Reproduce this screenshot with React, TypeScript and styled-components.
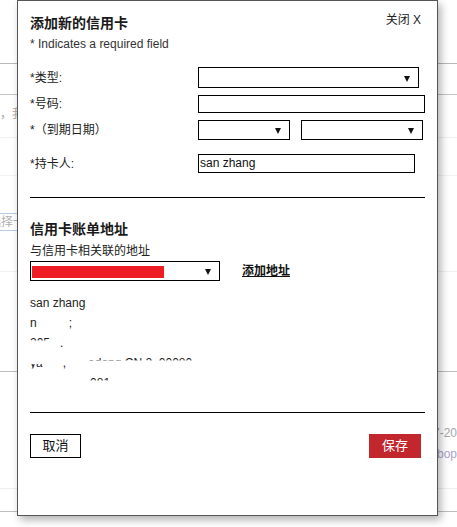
import React from 'react';
import styled, { createGlobalStyle } from 'styled-components';

const GlobalStyle = createGlobalStyle`
  html, body {
    margin: 0;
    padding: 0;
    background: #fff;
  }
  body {
    font-family: 'Liberation Sans', 'Noto Sans CJK SC', sans-serif;
    font-size: 12px;
    color: #222;
  }
`;

type Frag = { text: string; mode?: 'show' | 'hide' | 'top' | 'low' };

const addressLines: Frag[][] = [
  [{ text: 'san zhang' }],
  [{ text: 'n' }, { text: 'anjing', mode: 'hide' }, { text: ';' }],
  [{ text: '205', mode: 'top' }, { text: ' h', mode: 'hide' }, { text: '.' }],
  [
    { text: 'ya', mode: 'low' },
    { text: 'ngp', mode: 'hide' },
    { text: ',' },
    { text: ' dist', mode: 'hide' },
    { text: 'edong CN 2', mode: 'top' },
    { text: '0', mode: 'hide' },
    { text: '00080', mode: 'top' },
  ],
  [{ text: '130000000', mode: 'hide' }, { text: '081', mode: 'top' }],
];

function Arrow() {
  return (
    <ArrowIcon viewBox="0 0 6 6" width="6" height="6">
      <polygon points="0,0 6,0 3,6" fill="#111" />
    </ArrowIcon>
  );
}

function App(): JSX.Element {
  return (
    <Page>
      <GlobalStyle />
      <Backdrop>
        <BgRow $h={63} $line="#b8b8b8" />
        <BgRow $h={30} $line="#c4c4c4" />
        <BgRow $h={42} $line="#efefef">
          <BgText $top={12}>，我们</BgText>
        </BgRow>
        <BgRow $h={37} $line="#f2f2f2" />
        <BgRow $h={95} $line="#f0f0f0">
          <BgInput>请选择一项</BgInput>
        </BgRow>
        <BgRow $h={99} $line="#bdbdbd" />
        <BgRow $h={116} $line="#eeeeee">
          <BgRight>
            <BgDate>2017-2018</BgDate>
            <BgLink>shopbop</BgLink>
          </BgRight>
        </BgRow>
        <BgRow $h={22} $line="#bdbdbd" />
      </Backdrop>

      <Dialog>
        <Header>
          <Title>添加新的信用卡</Title>
          <Close>关闭 X</Close>
        </Header>
        <Note>* Indicates a required field</Note>

        <Form>
          <FormRow $mt={0}>
            <Label>*类型:</Label>
            <Select $w={221} $h={21}>
              <Arrow />
            </Select>
          </FormRow>
          <FormRow $mt={7}>
            <Label>*号码:</Label>
            <TextInput $w={227} $h={18} />
          </FormRow>
          <FormRow $mt={7}>
            <Label>*（到期日期）</Label>
            <Fields>
              <Select $w={92} $h={20}>
                <Arrow />
              </Select>
              <Select $w={122} $h={20}>
                <Arrow />
              </Select>
            </Fields>
          </FormRow>
          <FormRow $mt={14}>
            <Label>*持卡人:</Label>
            <TextInput $w={217} $h={19}>san zhang</TextInput>
          </FormRow>
        </Form>

        <Divider $mt={24} />

        <SectionTitle>信用卡账单地址</SectionTitle>
        <SubTitle>与信用卡相关联的地址</SubTitle>
        <AddressRow>
          <Select $w={190} $h={20}>
            <Redacted />
            <Arrow />
          </Select>
          <AddLink>添加地址</AddLink>
        </AddressRow>

        <Address>
          {addressLines.map((line, i) => (
            <AddressLine key={`line_${i}`}>
              {line.map((f, j) => (
                <Piece key={`piece_${j}`} $mode={f.mode || 'show'}>
                  {f.text}
                </Piece>
              ))}
            </AddressLine>
          ))}
        </Address>

        <Divider $mt={19} />

        <Footer>
          <CancelButton>取消</CancelButton>
          <SaveButton>保存</SaveButton>
        </Footer>
      </Dialog>
    </Page>
  );
}

const Page = styled.div`
  position: relative;
  width: 457px;
  height: 527px;
  overflow: hidden;
`;

const Backdrop = styled.div`
  display: flex;
  flex-direction: column;
`;

const BgRow = styled.div<{ $h: number; $line: string }>`
  position: relative;
  height: ${(p) => p.$h}px;
  border-bottom: 1px solid ${(p) => p.$line};
  flex-shrink: 0;
`;

const BgText = styled.div<{ $top: number }>`
  padding-top: ${(p) => p.$top}px;
  font-size: 12px;
  line-height: 14px;
  color: #a8a8a8;
`;

const BgInput = styled.div`
  margin: 37px 0 0 -24px;
  width: 120px;
  height: 18px;
  box-sizing: border-box;
  border: 1px solid #b7cbe2;
  font-size: 12px;
  line-height: 16px;
  color: #b0b0b0;
`;

const BgRight = styled.div`
  display: flex;
  flex-direction: column;
  gap: 7px;
  margin: 54px 0 0 413px;
  font-size: 12px;
  line-height: 14px;
`;

const BgDate = styled.span`
  color: #a6a6a6;
  white-space: nowrap;
`;

const BgLink = styled.span`
  color: #ada4c9;
  white-space: nowrap;
  margin-left: -2px;
`;

const Dialog = styled.div`
  position: absolute;
  left: 17px;
  top: 0;
  width: 421px;
  height: 516px;
  box-sizing: border-box;
  padding: 12px 12px 0 12px;
  background: #fff;
  border: 1px solid #555;
  box-shadow: 3px 4px 8px rgba(0, 0, 0, 0.3);
  display: flex;
  flex-direction: column;
`;

const Header = styled.div`
  display: flex;
  justify-content: space-between;
  align-items: flex-start;
`;

const Title = styled.h2`
  margin: 0;
  font-size: 14px;
  line-height: 20px;
  font-weight: bold;
  color: #1a1a1a;
`;

const Close = styled.span`
  margin-right: 4px;
  font-size: 12px;
  line-height: 14px;
  color: #222;
  cursor: pointer;
`;

const Note = styled.div`
  margin-top: 3px;
  font-size: 12px;
  line-height: 16px;
  color: #333;
`;

const Form = styled.div`
  margin-top: 15px;
  display: flex;
  flex-direction: column;
`;

const FormRow = styled.div<{ $mt: number }>`
  margin-top: ${(p) => p.$mt}px;
  display: grid;
  grid-template-columns: 168px 1fr;
  align-items: center;
`;

const Label = styled.label`
  font-size: 12px;
  line-height: 14px;
  color: #222;
`;

const Fields = styled.div`
  display: flex;
  gap: 11px;
`;

const Select = styled.div<{ $w: number; $h: number }>`
  width: ${(p) => p.$w}px;
  height: ${(p) => p.$h}px;
  box-sizing: border-box;
  border: 1px solid #000;
  padding: 2px 8px 0 1px;
  display: flex;
  align-items: center;
  justify-content: flex-end;
  background: #fff;
`;

const ArrowIcon = styled.svg`
  display: block;
  flex-shrink: 0;
`;

const TextInput = styled.div<{ $w: number; $h: number }>`
  width: ${(p) => p.$w}px;
  height: ${(p) => p.$h}px;
  box-sizing: border-box;
  border: 1px solid #000;
  padding: 0 1px;
  font-size: 12px;
  line-height: ${(p) => p.$h - 2}px;
  color: #111;
`;

const Divider = styled.hr<{ $mt: number }>`
  margin: ${(p) => p.$mt}px 0 0;
  border: 0;
  height: 1px;
  background: #000;
  flex-shrink: 0;
`;

const SectionTitle = styled.h3`
  margin: 21px 0 0;
  font-size: 14px;
  line-height: 20px;
  font-weight: bold;
  color: #1a1a1a;
`;

const SubTitle = styled.div`
  margin-top: 4px;
  font-size: 12px;
  line-height: 16px;
  color: #222;
`;

const AddressRow = styled.div`
  margin-top: 2px;
  display: flex;
  align-items: center;
  gap: 22px;
`;

const Redacted = styled.span`
  width: 132px;
  height: 12px;
  margin-right: auto;
  margin-top: -1px;
  background: #ee1c25;
`;

const AddLink = styled.a`
  font-size: 12px;
  line-height: 14px;
  font-weight: bold;
  color: #111;
  text-decoration: underline;
  cursor: pointer;
`;

const Address = styled.div`
  margin-top: 12px;
  display: flex;
  flex-direction: column;
`;

const AddressLine = styled.div`
  font-size: 12px;
  line-height: 20px;
  height: 20px;
  white-space: pre;
  color: #222;
`;

const clips = {
  show: 'none',
  hide: 'none',
  top: 'inset(0 0 62% 0)',
  low: 'inset(55% 0 22% 0)',
};

const Piece = styled.span<{ $mode: 'show' | 'hide' | 'top' | 'low' }>`
  display: inline-block;
  white-space: pre;
  color: ${(p) => (p.$mode === 'hide' ? 'transparent' : '#222')};
  clip-path: ${(p) => clips[p.$mode]};
`;

const Footer = styled.div`
  margin-top: 21px;
  padding-right: 4px;
  display: flex;
  justify-content: space-between;
`;

const CancelButton = styled.button`
  all: unset;
  box-sizing: border-box;
  width: 51px;
  height: 24px;
  border: 1px solid #000;
  text-align: center;
  font-family: 'Liberation Sans', 'Noto Sans CJK SC', sans-serif;
  font-size: 13px;
  line-height: 22px;
  color: #111;
  cursor: pointer;
`;

const SaveButton = styled.button`
  all: unset;
  box-sizing: border-box;
  width: 52px;
  height: 24px;
  background: #c1272d;
  text-align: center;
  font-family: 'Liberation Sans', 'Noto Sans CJK SC', sans-serif;
  font-size: 13px;
  line-height: 24px;
  color: #fff;
  cursor: pointer;
`;

export default App;
